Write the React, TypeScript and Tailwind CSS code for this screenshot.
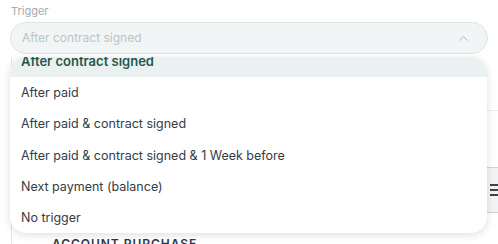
import { ChevronUp } from 'lucide-react'

const options = [
  'After contract signed',
  'After paid',
  'After paid & contract signed',
  'After paid & contract signed & 1 Week before',
  'Next payment (balance)',
  'No trigger',
]

export default function App() {
  const selected = 'After contract signed'
  return (
    <div className="relative h-[244px] w-[498px] overflow-hidden bg-white font-['Inter',sans-serif]">
      <div className="px-[10px] pt-[4px]">
        <div className="pl-[1px] text-[11px] leading-[14px] text-[#a3abae]">Trigger</div>
        <div className="mt-[4px] flex h-[32px] items-center justify-between rounded-full border border-[#dfe5e7] bg-[#f2f5f6] pl-[11px] pr-[16px]">
          <span className="text-[12px] text-[#b9c5c3]">After contract signed</span>
          <ChevronUp className="h-[15px] w-[15px] text-[#a9b2ba]" strokeWidth={1.5} />
        </div>
      </div>

      {/* content behind the open menu */}
      <div className="ml-[11px] mt-[4px] w-[560px] border-l border-[#e5e7eb]">
        <div className="h-[53px] border-b border-[#eeeeee]" />
        <div className="h-[56px]" />
        <div className="flex h-[46px] items-center justify-end border-y border-[#cfd3d6] bg-[#f1f3f4] pr-[73px]">
          <svg width="8" height="12" viewBox="0 0 8 12" className="text-[#3f4448]">
            <rect x="0" y="0" width="8" height="2" fill="currentColor" />
            <rect x="0" y="5" width="8" height="2" fill="currentColor" />
            <rect x="0" y="10" width="8" height="2" fill="currentColor" />
          </svg>
        </div>
        <div className="pl-[40px] pt-[22px] text-[12px] font-semibold tracking-[0.08em] text-[#2d3748]">
          ACCOUNT PURCHASE
        </div>
      </div>

      {/* open menu */}
      <div className="absolute left-[10px] top-[57px] h-[176px] w-[477px] overflow-hidden rounded-[16px] bg-white shadow-[0_2px_8px_rgba(0,0,0,0.13)]">
        <div className="-mt-[11px]">
          {options.map((o) => (
            <div
              key={o}
              className={
                o === selected
                  ? 'flex h-[31.25px] items-center bg-[#ebf1f0] px-[11px] pt-[1px] text-[13px] font-semibold text-[#1d5a4d]'
                  : 'flex h-[31.25px] items-center px-[11px] pt-[1px] text-[12.5px] text-[#343c48]'
              }
            >
              {o}
            </div>
          ))}
        </div>
      </div>
    </div>
  )
}
